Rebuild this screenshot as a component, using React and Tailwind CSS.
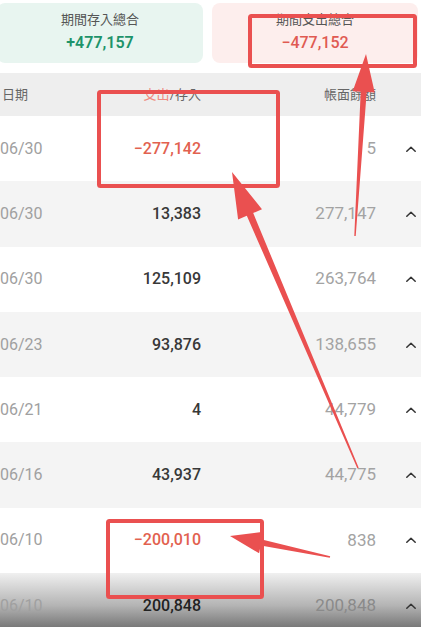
const rows = [
  { date: "06/30", amount: "−277,142", out: true, balance: "5" },
  { date: "06/30", amount: "13,383", balance: "277,147" },
  { date: "06/30", amount: "125,109", balance: "263,764" },
  { date: "06/23", amount: "93,876", balance: "138,655" },
  { date: "06/21", amount: "4", balance: "44,779" },
  { date: "06/16", amount: "43,937", balance: "44,775" },
  { date: "06/10", amount: "−200,010", out: true, balance: "838" },
  { date: "06/10", amount: "200,848", balance: "200,848" },
];

const font = { fontFamily: 'Roboto, "Noto Sans CJK TC", sans-serif' };

// Tapered shaft + triangular head, from start point to tip.
function arrowPoints([sx, sy], [tx, ty], headLen, headW, tailW, neckW) {
  const dx = tx - sx;
  const dy = ty - sy;
  const len = Math.hypot(dx, dy);
  const ux = dx / len;
  const uy = dy / len;
  const nx = -uy;
  const ny = ux;
  const bx = tx - ux * headLen;
  const by = ty - uy * headLen;
  const p = (x, y) => `${x.toFixed(1)},${y.toFixed(1)}`;
  return [
    p(sx + (nx * tailW) / 2, sy + (ny * tailW) / 2),
    p(bx + (nx * neckW) / 2, by + (ny * neckW) / 2),
    p(bx + (nx * headW) / 2, by + (ny * headW) / 2),
    p(tx, ty),
    p(bx - (nx * headW) / 2, by - (ny * headW) / 2),
    p(bx - (nx * neckW) / 2, by - (ny * neckW) / 2),
    p(sx - (nx * tailW) / 2, sy - (ny * tailW) / 2),
  ].join(" ");
}

function ChevronUp() {
  return (
    <svg width="12" height="8" viewBox="0 0 12 8" fill="none">
      <path d="M1.8 6.3 L6 2.2 L10.2 6.3" stroke="#333" strokeWidth="1.5" strokeLinecap="round" strokeLinejoin="round" />
    </svg>
  );
}

function Annotations() {
  const red = "#ea5050";
  return (
    <svg className="absolute inset-0 pointer-events-none" width="421" height="627" viewBox="0 0 421 627">
      <rect x="250" y="16" width="165" height="50" rx="1.5" fill="none" stroke={red} strokeWidth="4" />
      <rect x="99" y="92" width="179" height="94" rx="1.5" fill="none" stroke={red} strokeWidth="4" />
      <rect x="108" y="521" width="154" height="76" rx="1.5" fill="none" stroke={red} strokeWidth="4" />
      <polygon points={arrowPoints([355, 236], [366, 54], 38, 22, 1.5, 6)} fill={red} />
      <polygon points={arrowPoints([358, 468], [232, 172], 46, 26, 1.5, 7)} fill={red} />
      <polygon points={arrowPoints([330, 557], [230, 536], 32, 22, 1.5, 6)} fill={red} />
    </svg>
  );
}

export default function App() {
  return (
    <div className="relative w-[421px] h-[627px] overflow-hidden bg-white" style={font}>
      {/* Totals */}
      <div className="flex gap-[9px] ml-[-3px] w-[421px] pt-[3px]">
        <div className="w-[206px] h-[60px] rounded-lg bg-[#e8f5f0] flex flex-col items-center justify-center gap-[7px]">
          <span className="text-[13px] text-[#555] leading-none">期間存入總合</span>
          <span className="text-[16px] font-semibold text-[#1d936a] leading-[20px]">+477,157</span>
        </div>
        <div className="w-[206px] h-[60px] rounded-lg bg-[#fdeeed] flex flex-col items-center justify-center gap-[7px]">
          <span className="text-[13px] text-[#555] leading-none">期間支出總合</span>
          <span className="text-[16px] font-medium text-[#e05a52] leading-[20px]">−477,152</span>
        </div>
      </div>

      {/* Header */}
      <div className="mt-[10px] h-[43px] bg-[#eeeeee] flex items-center text-[13px] text-[#666]">
        <span className="w-[99px] pl-[2px]">日期</span>
        <span className="w-[102px] text-right">
          <span className="text-[#ef8a80]">支出</span>/存入
        </span>
        <span className="w-[175px] text-right">帳面餘額</span>
      </div>

      {/* Rows */}
      {rows.map((r, i) => (
        <div
          key={i}
          className={
            "h-[65.3px] flex items-center " +
            (i === 7
              ? "bg-linear-to-b from-[#f0f0f0] via-[#b4b4b4] to-[#5c5c5c]"
              : i % 2 === 0
              ? "bg-white"
              : "bg-[#f4f4f4]")
          }
        >
          <span className="w-[99px] text-[16px] text-[#a0a0a0]">{r.date}</span>
          <span
            className={
              "w-[102px] text-right text-[16px] font-medium " +
              (r.out ? "text-[#e2614f]" : i === 7 ? "text-[#222]" : "text-[#383838]")
            }
          >
            {r.amount}
          </span>
          <span className={"w-[175px] text-right text-[17px] " + (i === 7 ? "text-[#8a8a8a]" : "text-[#a3a3a3]")}>
            {r.balance}
          </span>
          <span className="ml-[29px] flex items-center">
            <ChevronUp />
          </span>
        </div>
      ))}

      <Annotations />
    </div>
  );
}
